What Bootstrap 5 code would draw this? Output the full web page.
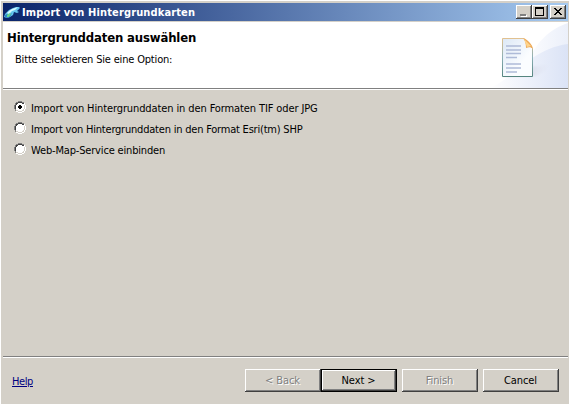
<!DOCTYPE html>
<html lang="de">
<head>
<meta charset="utf-8">
<meta name="viewport" content="width=device-width, initial-scale=1">
<title>Import von Hintergrundkarten</title>
<link href="https://cdn.jsdelivr.net/npm/bootstrap@5.3.0/dist/css/bootstrap.min.css" rel="stylesheet">
<style>
html,body{height:100%;overflow:hidden}
body{font-family:"DejaVu Sans Condensed","DejaVu Sans",sans-serif;font-stretch:condensed;font-size:11px;line-height:14px;color:#000;background:#fff;padding:1px 0 0 1px}
.dialog-window{background:#d4d0c8;padding:2px 1px 0 2px}
.title-strip{height:18px;background:linear-gradient(90deg,#0a246a,#a6caf0);color:#fff;font-weight:700;padding:0 2px 0 1px;flex:none}
.title-text{letter-spacing:.13px;margin-left:2px;padding-top:1px}
.caption-btn{width:16px;height:14px;padding:0;border:0;border-radius:0;background:#d4d0c8;box-shadow:inset -1px -1px #404040,inset 1px 1px #fff,inset -2px -2px #808080}
.caption-btn svg{display:block}
.close-btn{margin-left:2px}
.banner{height:67px;margin-top:1px;background:#fff;border-bottom:1px solid #808080;flex:none}
.banner h1{font-size:13px;font-weight:700;line-height:16px;letter-spacing:-.16px;margin:0;padding:8px 0 0 4px}
.banner p{margin:0;padding:7px 0 0 12px;letter-spacing:-.18px}
.options{padding:7px 0 0 11px;border-top:1px solid #fff}
.option-row{height:21px;letter-spacing:-.11px}
.option-row span{padding-top:2px}
.option-shp{letter-spacing:-.21px}
.option-wms{letter-spacing:-.17px}
.option-row input{appearance:none;position:absolute;opacity:0}
.option-row svg{margin:-1px 5px 0 0}
.rule{height:2px;background:linear-gradient(#808080 50%,#fff 50%);flex:none}
.actions{height:46px;padding:11px 9px 0 9px;flex:none}
.help-link{color:#000080;line-height:14px;margin-top:6px;letter-spacing:-.4px}
.help-link:hover{color:#000080}
.push{width:76px;height:23px;padding:0 1px 0 0;border:0;border-radius:0;background:#d4d0c8;color:#000;font-size:11px;line-height:14px;letter-spacing:-.1px;box-shadow:inset -1px -1px #404040,inset 1px 1px #fff,inset -2px -2px #808080}
.push:disabled{background:#d4d0c8;color:#808080;text-shadow:1px 1px #fff;opacity:1}
.push-default{box-shadow:inset 0 0 0 1px #000,inset -2px -2px #404040,inset 2px 2px #fff,inset -3px -3px #808080}
.gap-six{margin-left:5px}
</style>
<script src="https://cdn.jsdelivr.net/npm/bootstrap@5.3.0/dist/js/bootstrap.bundle.min.js"></script>
</head>
<body>
<svg width="0" height="0" class="position-absolute" aria-hidden="true">
<defs><g id="radio-ring" shape-rendering="crispEdges" fill="none">
<path fill="#fff" d="M4 2h4v1h2v6h-2v1H4V9H2V3h2z"/>
<path stroke="#808080" d="M4 .5h4M2 1.5h2M8 1.5h2M1.5 2v2M.5 4v4M1.5 8v2"/>
<path stroke="#404040" d="M4 1.5h4M2 2.5h2M8 2.5h2M2.5 3v1M1.5 4v4"/>
<path stroke="#fff" d="M10.5 2v2M11.5 4v4M10.5 8v2M2 10.5h2M8 10.5h2M4 11.5h4"/>
<path stroke="#d4d0c8" d="M10.5 4v4M9.500 8v1M2 9.500h2M8 9.500h2M4 10.500h4"/>
</g></defs></svg>
<main class="dialog-window h-100 d-flex flex-column">
<header class="title-strip d-flex align-items-center">
<svg width="16" height="16" viewBox="0 0 16 16" aria-hidden="true"><path fill="#65c5ee" d="M1 10 5 6 9 4 12 3h3l1 1-3 3 2 1-2 1-3-1-1 3-3 2-3 1-3-1z"/><path fill="#d6faff" d="m5 7 3-2 3-1 3-1-3 3-3 1-3 3-2-1z"/><path fill="#2d86c8" d="m1 11 2-1 2 1 3-2-2 4-3 1-2-1z"/><path fill="#65d68b" d="m3 11 3-2 1 1-2 3H3z"/></svg>
<span class="title-text">Import von Hintergrundkarten</span>
<div class="d-flex ms-auto">
<button class="btn caption-btn" aria-label="Minimieren"><svg width="16" height="14" shape-rendering="crispEdges"><path fill="#fff" d="M5 10h6v2H5z"/><path fill="#808080" d="M4 9h6v2H4z"/></svg></button>
<button class="btn caption-btn" aria-label="Maximieren"><svg width="16" height="14" shape-rendering="crispEdges"><path fill="#000" fill-rule="evenodd" d="M3 2h9v9H3zM4 4v6h7V4z"/></svg></button>
<button class="btn caption-btn close-btn" aria-label="Schließen"><svg width="16" height="14" shape-rendering="crispEdges"><path fill="#000" d="M4 3h2v1h1v1h2V4h1V3h2v1h-1v1h-1v1H9v1h1v1h1v1h1v1h-2V9H9V8H7v1H6v1H4V9h1V8h1V7h1V6H6V5H5V4H4z"/></svg></button>
</div>
</header>
<section class="banner d-flex justify-content-between">
<div><h1>Hintergrunddaten auswählen</h1><p>Bitte selektieren Sie eine Option:</p></div>
<svg width="108" height="66" viewBox="460 22 108 66" aria-hidden="true">
<defs><linearGradient id="sweep"><stop stop-color="#fff"/><stop offset="1" stop-color="#dbe3f6"/></linearGradient><linearGradient id="paper" x2="1" y2="1"><stop stop-color="#dce8f6"/><stop offset=".65" stop-color="#fbfdff"/></linearGradient><linearGradient id="edge" x2="0" y2="1"><stop stop-color="#e1c190"/><stop offset=".5" stop-color="#8cafb5"/><stop offset="1" stop-color="#55857f"/></linearGradient><linearGradient id="shade"><stop stop-color="#aaa9bd"/><stop offset="1" stop-color="#e7ebf8" stop-opacity="0"/></linearGradient><filter id="soft"><feGaussianBlur stdDeviation="1.2"/></filter></defs>
<path fill="url(#sweep)" opacity=".55" d="M520 88C526 55 542 31 568 23v65z"/><path fill="url(#sweep)" d="M490 88C518 75 531 49 568 44v44z"/>
<path fill="url(#shade)" filter="url(#soft)" d="m530 67 24-3-17 12h-35z"/>
<path fill="url(#paper)" stroke="url(#edge)" d="M502.500 38.500h21l9 10v28h-30z"/>
<path fill="#edaa59" d="M523 38c3 0 10 7 10 11-2-2-4-2-7-1 0-4-1-8-3-10z"/><path fill="#ffd48b" d="m524 39 7 7-4 1z"/>
<path stroke="#aebbd8" stroke-width="1.5" d="M506 46h15M506 50h15M506 53.500h15M506 57.500h11M506 64h15M506 68h15M506 72h11"/>
</svg>
</section>
<section class="options flex-grow-1">
<label class="option-row d-flex align-items-center"><input type="radio" name="source" checked><svg width="12" height="12"><use href="#radio-ring"/><path d="M5 4h2v1h1v2H7v1H5V7H4V5h1z" shape-rendering="crispEdges"/></svg><span>Import von Hintergrunddaten in den Formaten TIF oder JPG</span></label>
<label class="option-row option-shp d-flex align-items-center"><input type="radio" name="source"><svg width="12" height="12"><use href="#radio-ring"/></svg><span>Import von Hintergrunddaten in den Format Esri(tm) SHP</span></label>
<label class="option-row option-wms d-flex align-items-center"><input type="radio" name="source"><svg width="12" height="12"><use href="#radio-ring"/></svg><span>Web-Map-Service einbinden</span></label>
</section>
<div class="rule"></div>
<footer class="actions d-flex align-items-start">
<a class="help-link" href="#">Help</a>
<button class="btn push ms-auto" disabled>&lt; Back</button><button class="btn push push-default">Next &gt;</button><button class="btn push gap-six" disabled>Finish</button><button class="btn push gap-six">Cancel</button>
</footer>
</main>
</body>
</html>
